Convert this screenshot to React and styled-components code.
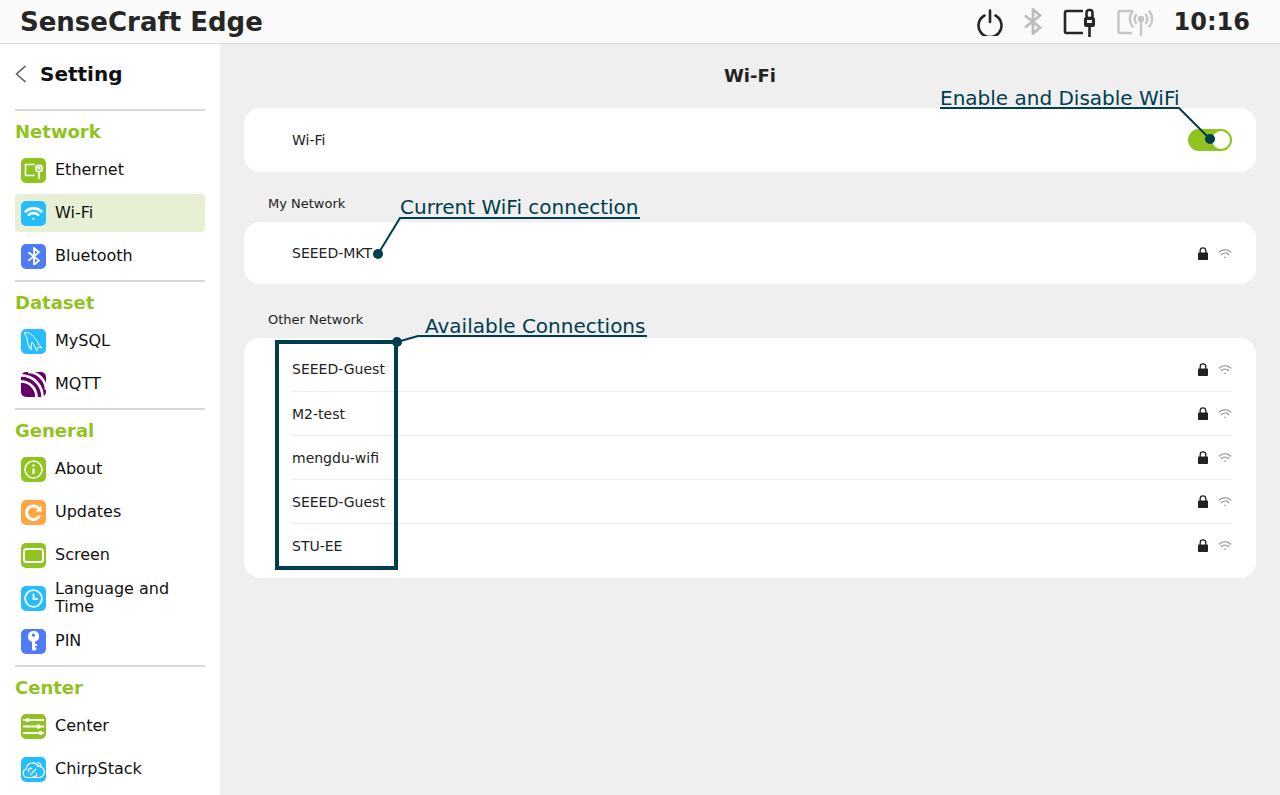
import React from 'react'
import styled, { createGlobalStyle } from 'styled-components'

const INK = '#003d4f'
const GREEN = '#8fc31f'
const SKY = '#26bdff'
const INDIGO = '#4f7bf7'
const ORANGE = '#ffa644'

const GlobalStyle = createGlobalStyle`
  html, body {
    margin: 0;
    padding: 0;
    background: #efefef;
  }
  body {
    font-family: 'DejaVu Sans', 'Liberation Sans', sans-serif;
    color: #111;
  }
`

const Page = styled.div`
  position: relative;
  width: 1280px;
  height: 795px;
  overflow: hidden;
  display: flex;
  flex-direction: column;
`

const TopBar = styled.header`
  height: 43px;
  flex: none;
  display: flex;
  align-items: center;
  padding: 0 30px 0 20px;
  background: #fafafa;
  border-bottom: 1px solid #dcdcdc;
`

const Brand = styled.div`
  font-size: 26px;
  font-weight: 700;
  color: #262626;
  flex: 1;
`

const StatusIcons = styled.div`
  display: flex;
  align-items: center;
  gap: 20px;
`

const Clock = styled.div`
  font-size: 24px;
  font-weight: 700;
  color: #262626;
`

const Body = styled.div`
  flex: 1;
  display: flex;
  min-height: 0;
`

const Sidebar = styled.nav`
  width: 220px;
  flex: none;
  box-sizing: border-box;
  padding: 0 15px;
  background: #fff;
`

const BackRow = styled.div`
  height: 65px;
  display: flex;
  align-items: center;
  gap: 14px;
  padding-bottom: 5px;
  box-sizing: border-box;
`

const BackTitle = styled.div`
  font-size: 20px;
  font-weight: 700;
  color: #111;
`

const SideDivider = styled.div`
  height: 2px;
  background: #d8d8d8;
`

const SectionTitle = styled.div`
  font-size: 18px;
  font-weight: 700;
  line-height: 24px;
  padding: 9px 0 7px;
  color: ${GREEN};
`

const SideList = styled.div`
  display: flex;
  flex-direction: column;
  gap: 5px;
  margin-bottom: 5px;
`

const SideItem = styled.div`
  height: 38px;
  display: flex;
  align-items: center;
  gap: 9px;
  padding: 0 10px 0 6px;
  border-radius: 4px;
  font-size: 16px;
  line-height: 18px;
  background: ${(p) => (p.$active ? '#e7f0d4' : 'transparent')};
`

const Tile = styled.span`
  width: 25px;
  height: 25px;
  flex: none;
  border-radius: 5px;
  display: flex;
  align-items: center;
  justify-content: center;
  background: ${(p) => p.$color};
`

const Main = styled.main`
  flex: 1;
  padding: 0 24px;
`

const PageTitle = styled.h1`
  margin: 0;
  padding: 20px 0;
  font-size: 18px;
  line-height: 24px;
  font-weight: 700;
  text-align: center;
  color: #222;
`

const GroupLabel = styled.div`
  padding: ${(p) => p.$top}px 0 8px 24px;
  font-size: 13px;
  line-height: 20px;
  color: #222;
`

const Card = styled.section`
  background: #fff;
  border-radius: 16px;
  padding: ${(p) => p.$pad || '0 24px 0 48px'};
`

const Row = styled.div`
  height: ${(p) => p.$height || 44}px;
  box-sizing: border-box;
  display: flex;
  align-items: center;
  justify-content: space-between;
  font-size: 14px;
  color: #222;
  & + & {
    border-top: 1px solid #ececec;
  }
`

const RowIcons = styled.div`
  display: flex;
  align-items: center;
  gap: 10px;
`

const Toggle = styled.div`
  width: 44px;
  height: 22px;
  box-sizing: border-box;
  border-radius: 11px;
  background: ${GREEN};
  display: flex;
  justify-content: flex-end;
  padding: 2px;
`

const Knob = styled.div`
  width: 18px;
  height: 18px;
  border-radius: 50%;
  background: #fff;
`

const Overlay = styled.svg`
  position: absolute;
  inset: 0;
  pointer-events: none;
`

const Note = styled.div`
  position: absolute;
  left: ${(p) => p.$x}px;
  top: ${(p) => p.$y}px;
  font-size: 20px;
  line-height: 24px;
  white-space: nowrap;
  color: ${INK};
`

const PowerIcon = () => (
  <svg width="26" height="28" viewBox="0 0 26 28" fill="none" stroke="#262626" strokeWidth="2.6" strokeLinecap="round">
    <path d="M7.5 7.5a11.5 11.5 0 1 0 11 0" />
    <path d="M13 2.5V14" />
  </svg>
)

const BluetoothIcon = ({ color = '#bdbdbd', size = 20, width = 2.8 }) => (
  <svg width={size} height={size * 1.35} viewBox="0 0 20 27" fill="none" stroke={color} strokeWidth={width}>
    <path d="M2 7.5l15 12-7 6V1.5l7 6-15 12" />
  </svg>
)

const EthernetIcon = () => (
  <svg width="34" height="30" viewBox="0 0 34 30" fill="none" stroke="#262626" strokeWidth="2.6">
    <path d="M20 4H3.5a1.5 1.5 0 0 0-1.5 1.5v19A1.5 1.5 0 0 0 3.5 26H20" strokeLinejoin="round" />
    <path d="M26.5 20v10" />
    <rect x="21" y="10" width="11" height="10" rx="2" fill="#262626" stroke="none" />
    <rect x="23.5" y="3" width="6" height="8" rx="2.5" />
    <rect x="24" y="13" width="5" height="3" fill="#fafafa" stroke="none" />
  </svg>
)

const AntennaIcon = () => (
  <svg width="37" height="30" viewBox="0 0 37 30" fill="none" stroke="#c6c6c6" strokeWidth="2.4" strokeLinecap="round">
    <path d="M14 4H3a1.5 1.5 0 0 0-1.5 1.5v19A1.5 1.5 0 0 0 3 26h11" />
    <circle cx="24" cy="12" r="2" fill="#c6c6c6" />
    <path d="M24 13v15" />
    <path d="M19 8a7 7 0 0 0 0 8M29 8a7 7 0 0 1 0 8" />
    <path d="M15.5 4.5a12 12 0 0 0 0 15M32.5 4.5a12 12 0 0 1 0 15" />
  </svg>
)

const WifiGlyph = ({ color = '#fff', size = 18, width = 2.4 }) => (
  <svg width={size} height={size * 0.78} viewBox="0 0 18 14" fill="none" stroke={color} strokeWidth={width} strokeLinecap="round">
    <path d="M1.5 5.2a11 11 0 0 1 15 0" />
    <path d="M4.5 8.4a6.6 6.6 0 0 1 9 0" />
    <circle cx="9" cy="12" r="1" fill={color} stroke="none" />
  </svg>
)

const LockGlyph = () => (
  <svg width="10" height="13" viewBox="0 0 10 13">
    <path d="M2.2 6V3.6a2.8 2.8 0 0 1 5.6 0V6" fill="none" stroke="#222" strokeWidth="1.3" />
    <rect x="0" y="5.5" width="10" height="7.5" rx="0.8" fill="#222" />
  </svg>
)

const EthernetTile = () => (
  <svg width="19" height="17" viewBox="0 0 19 17" fill="none" stroke="#fff" strokeWidth="1.6">
    <path d="M11 2.5H1.5v11H11" />
    <path d="M15 10v7" />
    <circle cx="15" cy="6.5" r="3.2" />
    <circle cx="15" cy="6" r="1" fill="#fff" />
  </svg>
)

const DolphinTile = () => (
  <svg width="23" height="23" viewBox="0 0 23 23" fill="none" stroke="#fff" strokeWidth="1" strokeLinejoin="round">
    <path d="M2 3c3-1 6 0 9 3 3 3 5 6 6 9l3 3-4-1c-1 1-1 3-1 4-2-3-3-7-5-9-1 3-1 5-1 8-3-4-4-9-4-12C4 6 3 4 2 3z" />
  </svg>
)

const MqttTile = () => (
  <svg width="25" height="25" viewBox="0 0 25 25" fill="none" stroke="#fff" strokeWidth="2.6">
    <path d="M0 9.5a15.5 15.5 0 0 1 15.5 15.5" />
    <path d="M0 3.4A21.6 21.6 0 0 1 21.6 25" />
    <path d="M7 0a18 18 0 0 1 18 18" />
  </svg>
)

const InfoTile = () => (
  <svg width="19" height="19" viewBox="0 0 19 19" fill="none" stroke="#fff" strokeWidth="1.6">
    <circle cx="9.5" cy="9.5" r="8.5" />
    <path d="M9.5 8.5v5.5" strokeWidth="2.2" />
    <circle cx="9.5" cy="5.5" r="1.2" fill="#fff" stroke="none" />
  </svg>
)

const RefreshTile = () => (
  <svg width="19" height="19" viewBox="0 0 19 19" fill="none" stroke="#fff" strokeWidth="3">
    <path d="M15.5 12.5a6.8 6.8 0 1 1-.6-6.6" />
    <path d="M17.5 2.5v6h-6z" fill="#fff" stroke="none" />
  </svg>
)

const ScreenTile = () => (
  <svg width="21" height="15" viewBox="0 0 21 15" fill="none" stroke="#fff" strokeWidth="2">
    <rect x="1" y="1" width="19" height="13" rx="2.5" />
  </svg>
)

const ClockTile = () => (
  <svg width="19" height="19" viewBox="0 0 19 19" fill="none" stroke="#fff" strokeWidth="1.8">
    <circle cx="9.5" cy="9.5" r="8.4" />
    <path d="M9.5 4.5v5.5H14" />
  </svg>
)

const KeyTile = () => (
  <svg width="11" height="20" viewBox="0 0 11 20" fill="#fff">
    <path fillRule="evenodd" d="M5.5 0a5.5 5.5 0 0 1 1.6 10.8V13h2v2h-2v1.5h1.4v2L5.5 20 4 18.6v-7.8A5.5 5.5 0 0 1 5.5 0zm0 2.6a1.6 1.6 0 1 0 0 3.2 1.6 1.6 0 0 0 0-3.2z" />
  </svg>
)

const SlidersTile = () => (
  <svg width="21" height="17" viewBox="0 0 21 17" fill="#fff">
    <rect y="1" width="21" height="2" />
    <rect y="7.5" width="21" height="2" />
    <rect y="14" width="21" height="2" />
    <rect x="3" y="0" width="3" height="4" />
    <rect x="14" y="6.5" width="3" height="4" />
    <rect x="16" y="13" width="3" height="4" />
  </svg>
)

const CloudTile = () => (
  <svg width="23" height="19" viewBox="0 0 23 19" fill="none" stroke="#fff" strokeWidth="1.2" strokeLinejoin="round">
    <path d="M5.5 17.5A4.5 4.5 0 0 1 4.5 8.7 6 6 0 0 1 16 6.5a5.5 5.5 0 0 1 1.5 11z" />
    <path d="M8 15l6-6M7 12a2 2 0 0 1 3-3M11 16a2 2 0 0 0 3-3" />
    <path d="M15 2.5a4 4 0 0 1 4 4M15.5 5a2 2 0 0 1 2 2" />
  </svg>
)

const sections = [
  {
    title: 'Network',
    items: [
      { label: 'Ethernet', color: GREEN, icon: <EthernetTile /> },
      { label: 'Wi-Fi', color: SKY, icon: <WifiGlyph size={19} />, active: true },
      { label: 'Bluetooth', color: INDIGO, icon: <BluetoothIcon color="#fff" size={14} width={2.6} /> },
    ],
  },
  {
    title: 'Dataset',
    items: [
      { label: 'MySQL', color: SKY, icon: <DolphinTile /> },
      { label: 'MQTT', color: '#660066', icon: <MqttTile /> },
    ],
  },
  {
    title: 'General',
    items: [
      { label: 'About', color: GREEN, icon: <InfoTile /> },
      { label: 'Updates', color: ORANGE, icon: <RefreshTile /> },
      { label: 'Screen', color: GREEN, icon: <ScreenTile /> },
      { label: 'Language and Time', color: SKY, icon: <ClockTile /> },
      { label: 'PIN', color: INDIGO, icon: <KeyTile /> },
    ],
  },
  {
    title: 'Center',
    items: [
      { label: 'Center', color: GREEN, icon: <SlidersTile /> },
      { label: 'ChirpStack', color: SKY, icon: <CloudTile /> },
    ],
  },
]

const otherNetworks = ['SEEED-Guest', 'M2-test', 'mengdu-wifi', 'SEEED-Guest', 'STU-EE']

const SignalIcons = () => (
  <RowIcons>
    <LockGlyph />
    <WifiGlyph color="#8c8c8c" size={14} width={1.5} />
  </RowIcons>
)

export default function App() {
  return (
    <Page>
      <GlobalStyle />
      <TopBar>
        <Brand>SenseCraft Edge</Brand>
        <StatusIcons>
          <PowerIcon />
          <BluetoothIcon />
          <EthernetIcon />
          <AntennaIcon />
          <Clock>10:16</Clock>
        </StatusIcons>
      </TopBar>
      <Body>
        <Sidebar>
          <BackRow>
            <svg width="11" height="18" viewBox="0 0 11 18" fill="none" stroke="#555" strokeWidth="1.5">
              <path d="M10.5 1L1.5 9l9 8" />
            </svg>
            <BackTitle>Setting</BackTitle>
          </BackRow>
          {sections.map((section) => (
            <React.Fragment key={section.title}>
              <SideDivider />
              <SectionTitle>{section.title}</SectionTitle>
              <SideList>
                {section.items.map((item) => (
                  <SideItem key={item.label} $active={item.active}>
                    <Tile $color={item.color}>{item.icon}</Tile>
                    {item.label}
                  </SideItem>
                ))}
              </SideList>
            </React.Fragment>
          ))}
        </Sidebar>
        <Main>
          <PageTitle>Wi-Fi</PageTitle>
          <Card>
            <Row $height={64}>
              Wi-Fi
              <Toggle>
                <Knob />
              </Toggle>
            </Row>
          </Card>
          <GroupLabel $top={22}>My Network</GroupLabel>
          <Card>
            <Row $height={62}>
              SEEED-MKT
              <SignalIcons />
            </Row>
          </Card>
          <GroupLabel $top={26}>Other Network</GroupLabel>
          <Card $pad="9px 24px 11px 48px">
            {otherNetworks.map((name, i) => (
              <Row key={i}>
                {name}
                <SignalIcons />
              </Row>
            ))}
          </Card>
        </Main>
      </Body>

      <Overlay width="1280" height="795" viewBox="0 0 1280 795" fill="none" stroke={INK} strokeWidth="2">
        <path d="M940 108H1179L1210 139" />
        <circle cx="1210" cy="139" r="5" fill={INK} stroke="none" />
        <path d="M640 218H400L378 254" />
        <circle cx="378" cy="254" r="5" fill={INK} stroke="none" />
        <path d="M647 336H418L397 342" />
        <circle cx="397" cy="342" r="5" fill={INK} stroke="none" />
        <rect x="277" y="342" width="119" height="226" strokeWidth="4" />
      </Overlay>
      <Note $x={940} $y={86}>Enable and Disable WiFi</Note>
      <Note $x={400} $y={195}>Current WiFi connection</Note>
      <Note $x={425} $y={314}>Available Connections</Note>
    </Page>
  )
}
